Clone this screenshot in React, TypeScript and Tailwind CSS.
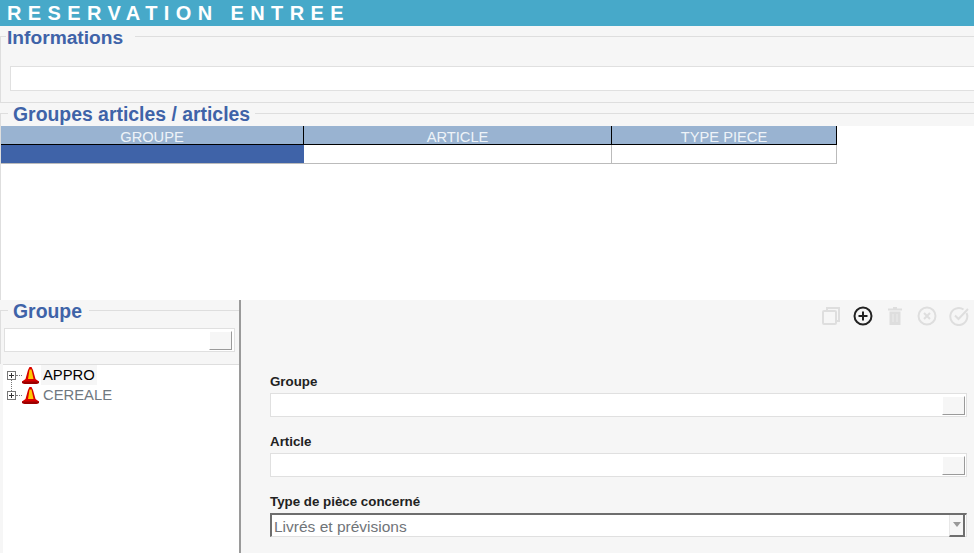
const SANS = "font-['Liberation_Sans',Arial,sans-serif]";

const ConeIcon = () => (
  <svg width="17" height="17" viewBox="0 0 17 17" className="shrink-0">
    <path d="M7.500 0h2l1.500 3 2.500 9 3.500 2.500V16l-3 1H3l-3-1v-1.500L3.500 12 6 3z" fill="#d90000" />
    <path d="M7.500 2.500h2l2 9.500H6z" fill="#ffc800" />
    <path d="M0 14.500h17V16l-3 1H3l-3-1z" fill="#9c0000" />
  </svg>
);

const Expander = () => (
  <span className="relative flex h-[9px] w-[9px] shrink-0 items-center justify-center border border-[#777] bg-white">
    <span className="absolute h-px w-[5px] bg-[#333]" />
    <span className="absolute h-[5px] w-px bg-[#333]" />
  </span>
);

const TreeRow = ({ label, active }: { label: string; active?: boolean }) => (
  <div className="flex h-5 items-center pl-[4px]">
    <Expander />
    <span className="w-[6px] border-t border-dotted border-[#777]" />
    <ConeIcon />
    <span className={`ml-[2px] px-[2px] text-[14.800px] leading-5 ${active ? "bg-[#f6f6f6] text-black" : "text-[#707880]"}`}>{label}</span>
  </div>
);

const SquareButton = ({ className }: { className: string }) => (
  <button className={`shrink-0 border-r border-b border-[#9a9a9a] border-t border-l border-t-white border-l-white bg-[#f6f6f6] ${className}`} />
);

const PickerField = ({ label }: { label: string }) => (
  <div className="flex flex-col">
    <label className="mb-[3px] text-[13.330px] leading-[17px] font-bold text-[#222]">{label}</label>
    <div className="flex h-6 items-center justify-end border border-[#e0e0e0] bg-white pr-[1px]">
      <SquareButton className="h-[19px] w-[23px]" />
    </div>
  </div>
);

const ToolIcons = () => (
  <div className="flex h-[31px] items-center justify-end gap-[12px] pr-[5px]">
    <svg width="20" height="20" viewBox="0 0 20 20" fill="none" stroke="#dedede" strokeWidth="2">
      <rect x="2" y="5" width="13" height="13" rx="1" />
      <path d="M6 5V2h12v13h-3" />
    </svg>
    <svg width="20" height="20" viewBox="0 0 20 20" fill="none" stroke="#222" strokeWidth="2">
      <circle cx="10" cy="10" r="8.500" />
      <path d="M10 5.500v9M5.500 10h9" />
    </svg>
    <svg width="20" height="20" viewBox="0 0 20 20" fill="#dedede">
      <path d="M8 1h4v1.500h5V4.500H3V2.500h5z" />
      <path d="M4.500 5.500h11V19h-11z" />
      <path d="M8 8v8M12 8v8" stroke="#ececec" strokeWidth="1" />
    </svg>
    <svg width="20" height="20" viewBox="0 0 20 20" fill="none" stroke="#dedede" strokeWidth="2">
      <circle cx="10" cy="10" r="8.500" />
      <path d="M7 7l6 6M13 7l-6 6" />
    </svg>
    <svg width="20" height="20" viewBox="0 0 20 20" fill="none" stroke="#dedede" strokeWidth="2">
      <path d="M17.500 7a8.500 8.500 0 1 1-3-3.500" />
      <path d="M6 9.500l3.500 3.500L19 3" />
    </svg>
  </div>
);

export default function App() {
  return (
    <div className={`${SANS} flex h-[553px] w-[974px] flex-col overflow-hidden bg-[#f6f6f6]`}>
      <div className="h-[26px] shrink-0 bg-[#47a9c9] pl-[7px] text-[20px] leading-[26px] font-bold tracking-[6.400px] text-white">RESERVATION ENTREE</div>

      <fieldset className="h-[77px] shrink-0 border border-r-0 border-[#dedede]">
        <legend className="ml-[5px] pt-[2px] pr-[12px] pl-[1px] text-[19.200px] leading-[19px] font-bold text-[#3f63a8]">Informations</legend>
        <div className="mt-[19px] ml-[9px] h-[25px] border border-r-0 border-[#e0e0e0] bg-white" />
      </fieldset>

      <fieldset className="h-[197px] shrink-0 border-t border-l border-[#dedede]">
        <legend className="ml-[7px] px-[5px] pt-[2px] text-[19.400px] leading-[19px] font-bold text-[#3f63a8]">Groupes articles / articles</legend>
        <div className="mt-[2px] h-[174px] bg-white">
          <div className="grid w-[836px] grid-cols-[303px_308px_225px]">
            <div className="h-[19px] border-r border-b border-black bg-[#99b3d1] text-center text-[14.670px] leading-[22px] text-[#eef3f8]">GROUPE</div>
            <div className="h-[19px] border-r border-b border-black bg-[#99b3d1] text-center text-[14.670px] leading-[22px] text-[#eef3f8]">ARTICLE</div>
            <div className="h-[19px] border-r border-b border-black bg-[#99b3d1] text-center text-[14.670px] leading-[22px] text-[#eef3f8]">TYPE PIECE</div>
            <div className="h-[19px] border-b border-[#bbb] bg-[#3f63a8]" />
            <div className="h-[19px] border-r border-b border-[#bbb] bg-white" />
            <div className="h-[19px] border-r border-b border-[#bbb] bg-white" />
          </div>
        </div>
      </fieldset>

      <div className="flex min-h-0 flex-1">
        <div className="flex w-[241px] shrink-0 flex-col border-r-2 border-[#9a9a9a]">
          <fieldset className="h-[64px] shrink-0 border-t border-l border-[#dedede]">
            <legend className="ml-[7px] pt-[2px] pr-[7px] pl-[5px] text-[19.400px] leading-[19px] font-bold text-[#3f63a8]">Groupe</legend>
            <div className="mt-[7px] ml-[3px] flex h-[24px] w-[231px] items-center justify-end border border-[#e0e0e0] bg-white pr-[2px]">
              <SquareButton className="h-[19px] w-[23px]" />
            </div>
          </fieldset>
          <div className="relative ml-[3px] flex-1 border-t border-[#dedede] bg-white">
            <TreeRow label="APPRO" active />
            <TreeRow label="CEREALE" />
            <span className="absolute top-[15px] left-[8px] h-[11px] border-l border-dotted border-[#777]" />
          </div>
        </div>

        <div className="flex min-w-0 flex-1 flex-col pl-[29px]">
          <ToolIcons />
          <div className="mt-[42px] flex flex-col gap-[16px] pr-[7px]">
            <PickerField label="Groupe" />
            <PickerField label="Article" />
            <div className="flex flex-col">
              <label className="mb-[3px] text-[13.330px] leading-[17px] font-bold text-[#222]">Type de pièce concerné</label>
              <div className="flex h-6 items-center justify-between border-t-2 border-l-2 border-b border-r border-t-[#6e6e6e] border-l-[#6e6e6e] border-b-[#e0e0e0] border-r-[#e0e0e0] bg-white pr-[1px] pl-[2px] text-[15.500px] text-[#707478]">
                <span className="pt-[2px]">Livrés et prévisions</span>
                <span className="flex h-[22px] w-[16px] items-center justify-center border-r-2 border-b-2 border-l border-[#6e6e6e] border-l-[#e8e8e8] bg-[#f6f6f6]">
                  <span className="h-0 w-0 border-t-[5px] border-r-[4px] border-l-[4px] border-t-[#999] border-r-transparent border-l-transparent" />
                </span>
              </div>
            </div>
          </div>
        </div>
      </div>
    </div>
  );
}
